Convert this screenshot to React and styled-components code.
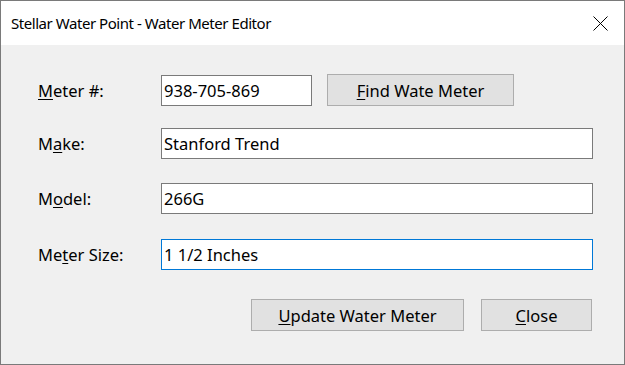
import React from "react";
import styled, { createGlobalStyle } from "styled-components";

const GlobalStyle = createGlobalStyle`
  html, body {
    margin: 0;
    padding: 0;
    background: #ffffff;
  }
  body {
    font-family: "Noto Sans", "Open Sans", "DejaVu Sans", sans-serif;
  }
`;

const Window = styled.div`
  box-sizing: border-box;
  width: 625px;
  height: 365px;
  border: 1px solid #7a7a7a;
  display: flex;
  flex-direction: column;
  background: #f0f0f0;
`;

const TitleBar = styled.div`
  height: 44px;
  background: #ffffff;
  display: flex;
  align-items: center;
  justify-content: space-between;
  padding: 0 16px 0 10px;
  font-size: 15px;
  letter-spacing: -0.45px;
  color: #000;
`;

const Body = styled.div`
  flex: 1;
  padding: 29px 0 0 37px;
  display: flex;
  flex-direction: column;
`;

const Row = styled.div`
  display: flex;
  align-items: center;
  margin-top: ${p => p.$top || 0}px;
  height: ${p => p.$height || 31}px;
`;

const Label = styled.label`
  width: 123px;
  font-size: 16.5px;
  color: #000;
`;

const Key = styled.span`
  text-decoration: underline;
  text-underline-offset: 2px;
  text-decoration-thickness: 1px;
`;

const TextBox = styled.div`
  box-sizing: border-box;
  width: ${p => p.$width}px;
  height: 31px;
  background: #ffffff;
  border: 1px solid ${p => (p.$focused ? "#0078d7" : "#7a7a7a")};
  display: flex;
  align-items: center;
  padding-left: 2px;
  font-size: 16.5px;
  color: #000;
`;

const Button = styled.div`
  box-sizing: border-box;
  width: ${p => p.$width}px;
  height: 32px;
  margin-left: ${p => p.$gap || 0}px;
  background: #e1e1e1;
  border: 1px solid #adadad;
  display: flex;
  align-items: center;
  justify-content: center;
  font-size: 16.5px;
  color: #000;
`;

const Actions = styled.div`
  display: flex;
  justify-content: flex-end;
  margin-top: 29px;
  padding-right: 32px;
`;

const CloseIcon = () => (
  <svg width="15" height="15" viewBox="0 0 15 15">
    <path d="M0.5 0.5 L14.5 14.5 M14.5 0.5 L0.5 14.5" stroke="#000" strokeWidth="1" fill="none" />
  </svg>
);

const App = () => (
  <>
    <GlobalStyle />
    <Window>
      <TitleBar>
        <span>Stellar Water Point - Water Meter Editor</span>
        <CloseIcon />
      </TitleBar>
      <Body>
        <Row $height={32}>
          <Label>
            <Key>M</Key>eter #:
          </Label>
          <TextBox $width={151}>938-705-869</TextBox>
          <Button $width={187} $gap={15}>
            <span>
              <Key>F</Key>ind Wate Meter
            </span>
          </Button>
        </Row>
        <Row $top={22}>
          <Label>
            M<Key>a</Key>ke:
          </Label>
          <TextBox $width={432}>Stanford Trend</TextBox>
        </Row>
        <Row $top={24}>
          <Label>
            M<Key>o</Key>del:
          </Label>
          <TextBox $width={432}>266G</TextBox>
        </Row>
        <Row $top={25}>
          <Label>
            Me<Key>t</Key>er Size:
          </Label>
          <TextBox $width={432} $focused>
            1 1/2 Inches
          </TextBox>
        </Row>
        <Actions>
          <Button $width={213}>
            <span>
              <Key>U</Key>pdate Water Meter
            </span>
          </Button>
          <Button $width={111} $gap={17}>
            <span>
              <Key>C</Key>lose
            </span>
          </Button>
        </Actions>
      </Body>
    </Window>
  </>
);

export default App;
